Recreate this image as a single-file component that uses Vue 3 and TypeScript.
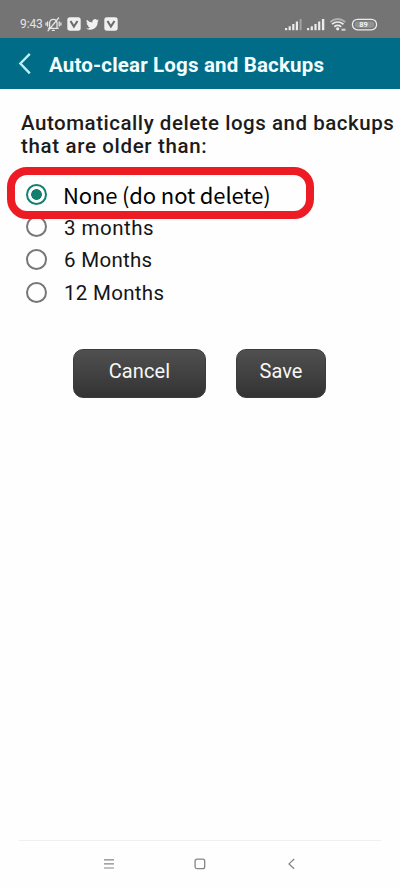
<script setup lang="ts">
import { ref } from 'vue'

interface Option {
  value: string
  label: string
}

const options: Option[] = [
  { value: 'none', label: 'None (do not delete)' },
  { value: '3', label: '3 months' },
  { value: '6', label: '6 Months' },
  { value: '12', label: '12 Months' },
]

const selected = ref<string>('none')
</script>

<template>
  <div class="screen">
    <div class="status">
      <span class="clock">9:43</span>
      <svg class="bell" width="17" height="15" viewBox="0 0 17 15" fill="none" stroke="#e6e6e6" stroke-width="1.3" stroke-linecap="round">
        <path d="M4.6 10.8V6.2C4.6 4 6 2.3 8.3 2.3S12 4 12 6.2v4.6M3.4 11.3h9.8M7.3 13.4h2M13.6 1L3 13.8M2.6 5v4M1 6v2M14.2 5v4M15.9 6v2" />
      </svg>
      <svg class="v-one" width="14" height="14" viewBox="0 0 14 14">
        <rect x="0.3" y="0.3" width="13.4" height="13.4" rx="2.6" fill="#f1f1f1" />
        <path d="M3.5 4l3.4 5.6 3.6-5.6" fill="none" stroke="#6d6d6d" stroke-width="2.1" />
      </svg>
      <svg class="bird" width="13" height="11" viewBox="0 0 24 20">
        <path fill="#f1f1f1" d="M24 2.4a10 10 0 0 1-2.8.8A5 5 0 0 0 23.3.5a10 10 0 0 1-3.1 1.2A4.9 4.9 0 0 0 11.8 6.2 14 14 0 0 1 1.7 1.1a4.9 4.9 0 0 0 1.5 6.5A5 5 0 0 1 1 7v.1a4.9 4.9 0 0 0 3.9 4.8 5 5 0 0 1-2.2.1 4.9 4.9 0 0 0 4.6 3.4A10 10 0 0 1 0 17.5 14 14 0 0 0 21.5 5Z" />
      </svg>
      <svg class="v-two" width="14" height="14" viewBox="0 0 14 14">
        <rect x="0.3" y="0.3" width="13.4" height="13.4" rx="2.6" fill="#f1f1f1" />
        <path d="M3.5 4l3.4 5.6 3.6-5.6" fill="none" stroke="#6d6d6d" stroke-width="2.1" />
      </svg>
      <svg class="system" width="96" height="16" viewBox="284 16 96 16">
        <g fill="#ececec">
          <rect x="285" y="28" width="2.2" height="2.2" />
          <rect x="288.6" y="26.3" width="2.2" height="3.9" />
          <rect x="292.2" y="24" width="2.2" height="6.2" />
          <rect x="295.8" y="21.5" width="2.2" height="8.7" />
          <rect x="299.6" y="19" width="2" height="11.2" opacity="0.4" />
          <rect x="307" y="28" width="2.2" height="2.2" />
          <rect x="310.7" y="26.3" width="2.2" height="3.9" />
          <rect x="314.4" y="24" width="2.2" height="6.2" />
          <rect x="318.1" y="21.5" width="2.2" height="8.7" />
          <rect x="321.9" y="19" width="2.4" height="11.2" />
          <circle cx="337.7" cy="28.8" r="1.6" />
          <path d="M341.5 28.7h4v2h-4z" opacity="0.8" />
        </g>
        <g fill="none" stroke="#ececec" stroke-width="1.7">
          <path d="M330.3 22q7.4-6 15 0" opacity="0.5" />
          <path d="M332 24.2q5.7-4.4 11.5 0" />
          <path d="M334.3 26.7q3.4-2.6 6.9 0" />
        </g>
        <rect x="352.4" y="19.3" width="24.2" height="10.5" rx="5.2" fill="none" stroke="#ececec" stroke-width="1.3" />
        <rect x="354.7" y="21.5" width="19.6" height="6.2" rx="3" fill="#929292" />
        <text x="363.5" y="27.3" class="battery" text-anchor="middle">89</text>
      </svg>
    </div>

    <header class="bar">
      <svg class="back" width="14" height="24" viewBox="0 0 14 24" fill="none" stroke="#b5f2f7" stroke-width="2.4">
        <path d="M11.8 1.9L2.4 11.5l9.4 9.9" />
      </svg>
      <h1>Auto-clear Logs and Backups</h1>
    </header>

    <main>
      <h2><span class="line-one">Automatically delete logs and backups</span><br /><span class="line-two">that are older than:</span></h2>

      <div class="options" role="radiogroup">
        <div
          v-for="option in options"
          :key="option.value"
          class="option"
          :class="['opt-' + option.value, { checked: selected === option.value }]"
          role="radio"
          :aria-checked="selected === option.value"
          @click="selected = option.value"
        >
          <span class="radio"></span>
          <span class="label">{{ option.label }}</span>
        </div>
        <div class="highlight"></div>
      </div>

      <div class="actions">
        <button class="cancel" type="button">Cancel</button>
        <button class="save" type="button">Save</button>
      </div>
    </main>

    <nav class="navigation">
      <svg width="12" height="12" viewBox="0 0 12 12" stroke="#858585" stroke-width="1.2">
        <path d="M1 1.8h10M1 5.9h10M1 10h10" />
      </svg>
      <svg width="12" height="12" viewBox="0 0 12 12" fill="none" stroke="#858585" stroke-width="1.3">
        <rect x="1.1" y="1.1" width="9.6" height="9.6" rx="2" />
      </svg>
      <svg width="12" height="12" viewBox="0 0 12 12" fill="none" stroke="#858585" stroke-width="1.3">
        <path d="M9.2 1L4 5.9l5.2 4.9" />
      </svg>
    </nav>
  </div>
</template>

<style>
body {
  margin: 0;
  background: #fff;
}
</style>

<style scoped>
.screen {
  width: 400px;
  height: 888px;
  display: flex;
  flex-direction: column;
  overflow: hidden;
  background: #fefefe;
  font-family: Roboto, "Liberation Sans", sans-serif;
}
.status {
  flex: none;
  box-sizing: border-box;
  height: 38px;
  padding: 10px 20px 0;
  display: flex;
  align-items: center;
  background: #747474;
}
.clock {
  width: 25px;
  font-size: 12px;
  letter-spacing: -0.1px;
  color: #e4e4e4;
}
.v-one { margin-left: 5px; }
.bird { margin-left: 5px; }
.v-two { margin-left: 5px; }
.system { margin-left: 166px; flex: none; }
svg { flex: none; display: block; }
.battery {
  font-size: 7.5px;
  font-weight: 500;
  fill: #fff;
}
.bar {
  flex: none;
  box-sizing: border-box;
  height: 51px;
  padding: 0 18px;
  display: flex;
  align-items: center;
  background: #006c87;
}
h1 {
  margin: 2px 0 0 17px;
  font-size: 20.5px;
  font-weight: 700;
  line-height: 24px;
  letter-spacing: 0.17px;
  white-space: nowrap;
  color: #f2feff;
}
main {
  flex: 1;
  padding: 23px 0 0 21px;
}
h2 {
  margin: 0;
  height: 46px;
  font-size: 20.5px;
  line-height: 23px;
  font-weight: 500;
  white-space: nowrap;
  color: #1c1c1c;
}
.line-one { letter-spacing: 0.53px; }
.line-two { letter-spacing: 0.66px; }
.options {
  position: relative;
  margin-top: 20px;
}
.option {
  height: 32.6px;
  display: flex;
  align-items: center;
  color: #151515;
  font-size: 20.5px;
  letter-spacing: 0.3px;
}
.radio {
  box-sizing: border-box;
  flex: none;
  width: 21px;
  height: 21px;
  margin: 0 17px 0 5px;
  border: 2px solid #777;
  border-radius: 50%;
}
.checked .radio {
  border-color: #12806f;
  background: radial-gradient(circle, #12806f 0 5px, transparent 5.7px);
}
.label { padding-top: 2px; }
.opt-3 { letter-spacing: 0.5px; }
.opt-none .label {
  margin-left: -1px;
  padding: 0 0 1px;
  font-family: "Noto Sans CJK SC", Roboto, sans-serif;
  font-size: 22px;
  line-height: 26px;
  letter-spacing: -0.14px;
  color: #000;
}
.highlight {
  position: absolute;
  left: -14px;
  top: -11px;
  box-sizing: border-box;
  width: 307px;
  height: 52px;
  border: 8px solid #ed1c24;
  border-radius: 20px;
  pointer-events: none;
}
.actions {
  display: flex;
  gap: 30px;
  margin: 41px 0 0 52px;
}
button {
  box-sizing: border-box;
  height: 49px;
  padding: 0 0 5px;
  border: 1px solid #3c3c3c;
  border-radius: 10px;
  background: linear-gradient(#505050, #333);
  color: #f7f7f7;
  font-family: inherit;
  font-size: 20px;
  letter-spacing: 0.1px;
}
.cancel { width: 133px; }
.save { width: 90px; }
.navigation {
  flex: none;
  box-sizing: border-box;
  height: 48px;
  margin: 0 19px;
  padding-bottom: 2px;
  border-top: 1px solid #efefef;
  display: flex;
  justify-content: center;
  align-items: center;
  gap: 79px;
}
</style>
